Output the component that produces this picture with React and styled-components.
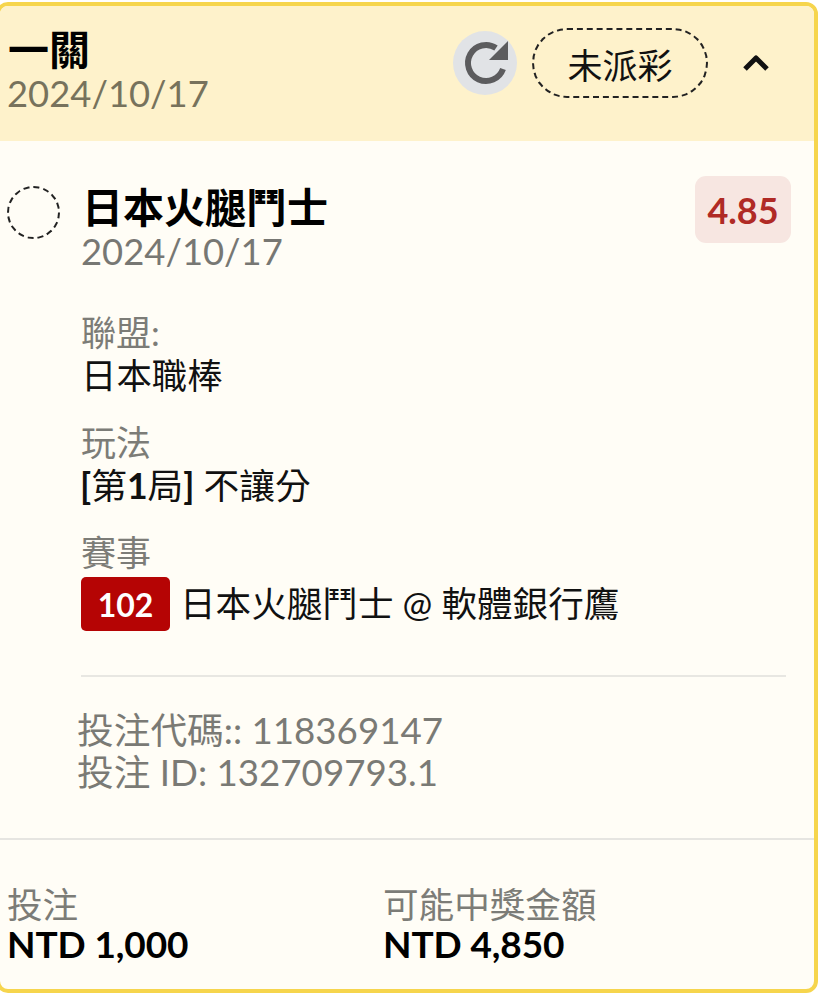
import React from "react";
import styled, { createGlobalStyle } from "styled-components";

const Global = createGlobalStyle`
  html, body { margin: 0; padding: 0; background: #fff; overflow: hidden; }
  body { font-family: Lato, "Noto Sans CJK TC", sans-serif; }
`;
const Card = styled.div`
  box-sizing: border-box; width: 822px; height: 991px; margin: 2px 0 0 -4px;
  border: 4px solid #f6d54d; border-radius: 12px; background: #fffdf6; overflow: hidden;
`;
const Header = styled.header`
  box-sizing: border-box; height: 135px; background: #fef2cb; padding: 21px 0 0 8px;
  display: flex; justify-content: space-between; align-items: flex-start;
`;
const Stack = styled.div`display: flex; flex-direction: column;`;
const Title = styled.div`font-size: 41px; line-height: 46px; font-weight: 700; color: #000;`;
const DateText = styled.div`font-size: 36.4px; line-height: 40px; color: ${p => p.$c || "#777773"}; margin-left: -1px;`;
const Actions = styled.div`display: flex; align-items: center; margin-top: 1px;`;
const Refresh = styled.div`
  width: 64px; height: 64px; border-radius: 50%; background: #e1e3e6;
  display: flex; align-items: center; justify-content: center; margin-right: 15px;
`;
const Pill = styled.div`
  box-sizing: border-box; width: 176px; height: 70px; border: 2px dashed #222; border-radius: 35px;
  display: flex; align-items: center; justify-content: center; font-size: 35px; color: #111; margin-right: 33px;
`;
const Chevron = styled.svg`width: 30px; height: 24px; margin-right: 43px;`;
const Main = styled.section`
  box-sizing: border-box; height: 699px; padding: 34px 23px 0 7px; display: flex; flex-direction: column;
  border-bottom: 2px solid #e6e5e1;
`;
const Pick = styled.div`display: flex; align-items: flex-start;`;
const Radio = styled.div`
  box-sizing: border-box; width: 53px; height: 53px; border: 2px dashed #222; border-radius: 50%;
  margin: 11px 22px 0 0; flex: none;
`;
const PickInfo = styled.div`flex: 1; display: flex; flex-direction: column; padding-top: 10px;`;
const Odds = styled.div`
  width: 96px; height: 67px; border-radius: 11px; background: #f7e6e1; color: #b02a25;
  font-size: 36px; font-weight: 700; display: flex; align-items: center; justify-content: center;
  margin-top: 1px;
`;
const Details = styled.div`margin: 39px 0 0 74px; display: flex; flex-direction: column; gap: 22px;`;
const Field = styled.div`display: flex; flex-direction: column;`;
const Label = styled.div`font-size: 35px; line-height: 44px; color: #7c7c77;`;
const Value = styled.div`
  font-size: ${p => p.$size || 35.4}px; line-height: 44px; color: #111; margin-left: ${p => p.$indent || 0}px;
  b { font-weight: 700; }
`;
const EventRow = styled.div`display: flex; align-items: center; gap: 10px; margin-top: 3px;`;
const Code = styled.div`
  width: 89px; height: 54px; border-radius: 5px; background: #b50404; color: #fff;
  font-size: 32px; font-weight: 700; display: flex; align-items: center; justify-content: center;
`;
const Rule = styled.hr`border: 0; height: 2px; background: #e8e7e2; margin: 44px 5px 0 74px;`;
const Ids = styled.div`margin: 32px 0 0 70px; font-size: 36.7px; line-height: 42px; color: #7a7a75;`;
const Footer = styled.footer`display: grid; grid-template-columns: 376px 1fr; padding: 45px 0 0 8px;`;
const Amount = styled.div`font-size: 37px; line-height: 38px; font-weight: 700; color: #000; letter-spacing: -0.1px; margin-left: -1px;`;
const FootLabel = styled(Label)`font-size: 35.6px; line-height: 40px; margin-left: -1px;`;

export default function App() {
  return (
    <>
      <Global />
      <Card>
        <Header>
          <Stack>
            <Title>一關</Title>
            <DateText $c="#77725c">2024/10/17</DateText>
          </Stack>
          <Actions>
            <Refresh>
              <svg width="46" height="46" viewBox="0 0 46 46" fill="none">
                <path d="M41 29 A18 18 0 1 1 34 8" stroke="#5c5c5e" strokeWidth="6" />
                <path d="M46 1 V20 H27 Z" fill="#5c5c5e" />
              </svg>
            </Refresh>
            <Pill>未派彩</Pill>
            <Chevron viewBox="0 0 30 24" fill="none">
              <path d="M4 18 L15 7 L26 18" stroke="#111" strokeWidth="5" strokeLinejoin="round" />
            </Chevron>
          </Actions>
        </Header>
        <Main>
          <Pick>
            <Radio />
            <PickInfo>
              <Title>日本火腿鬥士</Title>
              <DateText>2024/10/17</DateText>
            </PickInfo>
            <Odds>4.85</Odds>
          </Pick>
          <Details>
            <Field><Label>聯盟:</Label><Value>日本職棒</Value></Field>
            <Field><Label>玩法</Label><Value $size={35.7} $indent={-1}><b>[</b>第<b>1</b>局<b>]</b> 不讓分</Value></Field>
            <Field>
              <Label>賽事</Label>
              <EventRow><Code>102</Code><Value $size={35.6}>日本火腿鬥士 @ 軟體銀行鷹</Value></EventRow>
            </Field>
          </Details>
          <Rule />
          <Ids>
            <div>投注代碼:: 118369147</div>
            <div>投注 ID: 132709793.1</div>
          </Ids>
        </Main>
        <Footer>
          <Stack><FootLabel>投注</FootLabel><Amount>NTD 1,000</Amount></Stack>
          <Stack><FootLabel>可能中獎金額</FootLabel><Amount>NTD 4,850</Amount></Stack>
        </Footer>
      </Card>
    </>
  );
}
